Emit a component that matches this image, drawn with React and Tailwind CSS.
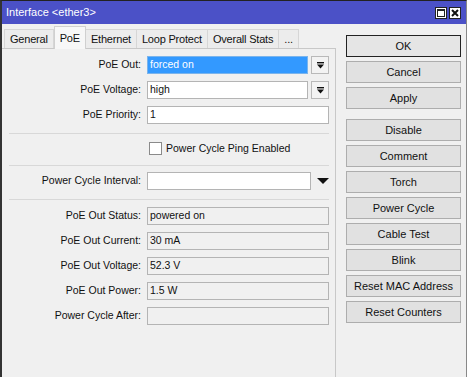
import React from "react";

const tabs = ["General", "PoE", "Ethernet", "Loop Protect", "Overall Stats", "..."];

const buttons = [
  ["OK", true],
  ["Cancel"],
  ["Apply"],
  null,
  ["Disable"],
  ["Comment"],
  ["Torch"],
  ["Power Cycle"],
  ["Cable Test"],
  ["Blink"],
  ["Reset MAC Address"],
  ["Reset Counters"],
];

function DropBtn() {
  return (
    <div className="ml-[3px] flex h-[18px] w-[18px] items-center justify-center border border-[#b9b9b9] bg-[#f3f3f3]">
      <svg width="9" height="9" viewBox="0 0 9 9">
        <rect x="1" y="1" width="7" height="1.4" fill="#111" />
        <path d="M1 3.5h7L4.5 7.5z" fill="#111" />
      </svg>
    </div>
  );
}

function Row({ label, children, className = "" }) {
  return (
    <div className={"flex items-center " + className}>
      <div className="w-[139px] pr-[1px] text-right">{label}</div>
      <div className="ml-[5px] flex flex-1 items-center">{children}</div>
    </div>
  );
}

function Box({ value, readOnly, selected, className = "" }) {
  return (
    <div
      className={
        "flex h-[18px] items-center border px-[2px] " +
        (selected
          ? "border-[#7ab4ec] bg-[#3399ff] text-white "
          : readOnly
          ? "border-[#b4b4b4] bg-[#f0f0f0] "
          : "border-[#b4b4b4] bg-white ") +
        className
      }
    >
      {value}
    </div>
  );
}

export default function App() {
  return (
    <div
      className="h-[377px] w-[467px] overflow-hidden border-l-[2px] border-r border-t border-l-[#333] border-r-[#888] border-t-[#222] bg-[#f0f0f0] text-[10.5px] text-[#111]"
      style={{ fontFamily: '"Liberation Sans", Arial, sans-serif' }}
    >
      {/* title bar */}
      <div className="flex h-[23px] items-center justify-between bg-[#4b51c7] pl-[4px] pr-[5px] text-white">
        <span className="text-[11px]">Interface &lt;ether3&gt;</span>
        <div className="flex gap-[2px]">
          <div className="flex h-[12px] w-[12px] items-center justify-center border border-[#222] bg-white">
            <div className="h-[8px] w-[8px] border border-t-[2px] border-[#222]" />
          </div>
          <div className="flex h-[12px] w-[12px] items-center justify-center border border-[#222] bg-white">
            <svg width="8" height="8" viewBox="0 0 8 8">
              <path d="M1 1L7 7M7 1L1 7" stroke="#111" strokeWidth="2" />
            </svg>
          </div>
        </div>
      </div>

      <div className="flex">
        {/* left: tabs + panel */}
        <div className="w-[334px]">
          <div className="flex h-[24px] items-end pl-[2px] text-[11px] tracking-[-0.2px]">
            {tabs.map((t) =>
              t === "PoE" ? (
                <div
                  key={t}
                  className="relative z-10 -mb-px flex h-[23px] items-center border border-b-0 border-[#d0d0d0] bg-[#f7f7f7] px-[5px]"
                >
                  {t}
                </div>
              ) : (
                <div
                  key={t}
                  className="flex h-[19px] items-center border border-b-0 border-l-0 border-[#d6d6d6] bg-[#ececec] px-[5px] first:border-l"
                >
                  {t}
                </div>
              )
            )}
          </div>
          <div className="h-[330px] border-r border-t border-[#c8c8c8] pl-[1px] pr-[6px] pt-[7px]">
            <div className="flex flex-col gap-[7px]">
              <Row label="PoE Out:">
                <Box value="forced on" selected className="flex-1" />
                <DropBtn />
              </Row>
              <Row label="PoE Voltage:">
                <Box value="high" className="flex-1" />
                <DropBtn />
              </Row>
              <Row label="PoE Priority:">
                <Box value="1" className="flex-1" />
              </Row>
            </div>
            <div className="ml-[6px] mt-[9px] border-t border-[#d8d8d8]" />
            <div className="flex h-[31px] items-start pl-[146px] pt-[8px]">
              <div className="h-[13px] w-[13px] border border-[#8a8a8a] bg-white" />
              <span className="ml-[4px] leading-[13px]">Power Cycle Ping Enabled</span>
            </div>
            <div className="ml-[6px] border-t border-[#d8d8d8]" />
            <Row label="Power Cycle Interval:" className="mt-[6px]">
              <Box value="" className="w-[164px]" />
              <svg width="12" height="7" viewBox="0 0 12 7" className="ml-[6px]">
                <path d="M0 0h12L6 6z" fill="#111" />
              </svg>
            </Row>
            <div className="ml-[6px] mt-[9px] border-t border-[#d8d8d8]" />
            <div className="mt-[7px] flex flex-col gap-[7px]">
              <Row label="PoE Out Status:">
                <Box value="powered on" readOnly className="flex-1" />
              </Row>
              <Row label="PoE Out Current:">
                <Box value="30 mA" readOnly className="flex-1" />
              </Row>
              <Row label="PoE Out Voltage:">
                <Box value="52.3 V" readOnly className="flex-1" />
              </Row>
              <Row label="PoE Out Power:">
                <Box value="1.5 W" readOnly className="flex-1" />
              </Row>
              <Row label="Power Cycle After:">
                <Box value="" readOnly className="flex-1" />
              </Row>
            </div>
          </div>
        </div>

        {/* right: buttons */}
        <div className="flex flex-1 flex-col gap-[4px] pl-[10px] pr-[5px] pt-[11px] text-[11px]">
          {buttons.map((b, i) =>
            b === null ? (
              <div key={i} className="h-[2px]" />
            ) : (
              <div
                key={i}
                className={
                  "flex h-[22px] items-center justify-center bg-[#e1e1e1] " +
                  (b[1] ? "border-[1.5px] border-[#222] bg-[#e5e5e5]" : "border border-[#adadad]")
                }
              >
                {b[0]}
              </div>
            )
          )}
        </div>
      </div>
    </div>
  );
}
